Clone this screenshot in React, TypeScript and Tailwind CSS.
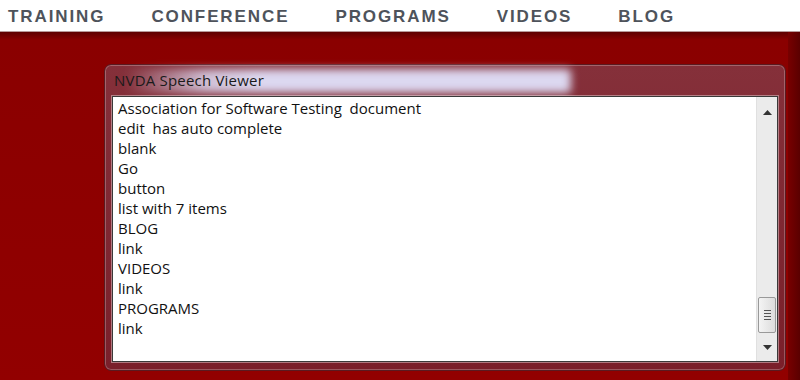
import React from "react";

const lines = [
  "Association for Software Testing\u00a0 document",
  "edit\u00a0 has auto complete",
  "blank",
  "Go",
  "button",
  "list with 7 items",
  "BLOG",
  "link",
  "VIDEOS",
  "link",
  "PROGRAMS",
  "link",
];

export default function App() {
  const nav = ["TRAINING", "CONFERENCE", "PROGRAMS", "VIDEOS", "BLOG"];
  return (
    <div className="w-[800px] h-[380px] overflow-hidden flex flex-col bg-white">
      <div className="h-[32px] flex items-center pl-[8px] pt-[2px] gap-[46px] bg-white border-b border-[#b89a9a]">
        {nav.map((n) => (
          <span
            key={n}
            className="text-[17px] font-bold tracking-[1.9px] text-[#4e535b]"
            style={{ fontFamily: '"Liberation Sans", Arial, sans-serif' }}
          >
            {n}
          </span>
        ))}
      </div>
      <div className="flex-1 flex bg-[linear-gradient(to_bottom,#5e0000_0px,#8a0000_8px,#920000_100%)]">
        <div className="flex-1 pl-[104px] pt-[32px]">
          <div className="relative w-[682px] h-[307px] rounded-[7px] border border-[#5a1a20] bg-[linear-gradient(to_bottom,#85303a,#7a1f2a)] shadow-[inset_0_0_0_1px_rgba(255,255,255,0.25)] flex flex-col px-[7px] pb-[8px]">
            <div className="absolute left-[20px] top-[4px] w-[446px] h-[24px] rounded-[4px] bg-[linear-gradient(to_right,rgba(220,216,240,0)_0%,rgba(220,216,240,0.85)_18%,#dcd8f0_30%,#dcd8f0_100%)] blur-[4px]" />
            <div
              className="relative h-[31px] flex items-center pl-[2px] pb-[1px] text-[15px] tracking-[0.2px] text-[#1a1a1a]"
              style={{ fontFamily: '"Open Sans", "Noto Sans", sans-serif' }}
            >
              NVDA Speech Viewer
            </div>
            <div className="relative flex-1 border border-[#3a3a3a] shadow-[0_0_0_1px_rgba(255,255,255,0.4)] bg-white flex">
              <div
                className="flex-1 pl-[5px] pt-[1px] text-[15px] leading-[20px] text-[#111]"
                style={{ fontFamily: '"Open Sans", "Noto Sans", sans-serif' }}
              >
                {lines.map((l, i) => (
                  <div key={i} className="whitespace-pre">{l}</div>
                ))}
              </div>
              <div className="w-[21px] bg-[#ebebeb] border-l border-[#e0e0e0] flex flex-col items-center">
                <div className="h-[28px] flex items-center justify-center pt-[2px]">
                  <svg width="9" height="5" viewBox="0 0 9 5"><path d="M0 5 L4.5 0 L9 5 Z" fill="#333" /></svg>
                </div>
                <div className="flex-1" />
                <div className="w-[18px] h-[36px] rounded-[2px] border border-[#999] bg-[linear-gradient(to_right,#f4f4f4,#dcdcdc)] flex flex-col items-center justify-center gap-[2px]">
                  <div className="w-[7px] h-[1px] bg-[#555]" />
                  <div className="w-[7px] h-[1px] bg-[#555]" />
                  <div className="w-[7px] h-[1px] bg-[#555]" />
                  <div className="w-[7px] h-[1px] bg-[#555]" />
                </div>
                <div className="h-[28px] flex items-center justify-center">
                  <svg width="9" height="5" viewBox="0 0 9 5"><path d="M0 0 L4.5 5 L9 0 Z" fill="#333" /></svg>
                </div>
              </div>
            </div>
          </div>
        </div>
        <div className="w-[12px] bg-[linear-gradient(to_right,#780000,#5a0000)]" />
      </div>
    </div>
  );
}
